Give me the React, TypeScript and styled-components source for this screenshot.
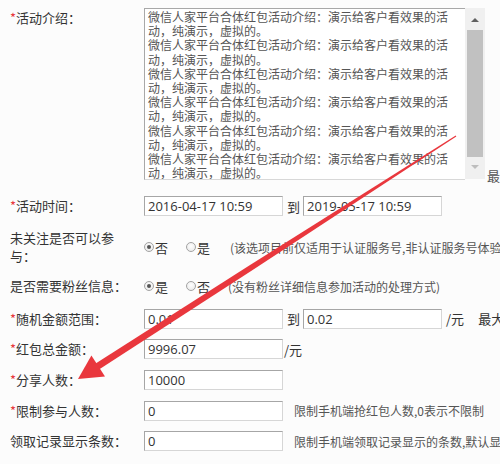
import React from 'react';
import styled, { createGlobalStyle } from 'styled-components';

const Global = createGlobalStyle`
  html, body { margin: 0; padding: 0; background: #fcfcfc; overflow: hidden; }
`;

const Page = styled.div`
  position: relative;
  width: 500px;
  height: 464px;
  overflow: hidden;
  box-sizing: border-box;
  padding: 8px 0 0 10px;
  font-family: "Noto Sans CJK SC", "Open Sans", sans-serif;
  color: #333;
  background: #fcfcfc;
`;

const Row = styled.div<{ $h: number; $top?: boolean }>`
  display: grid;
  grid-template-columns: 134px 1fr;
  align-items: ${p => (p.$top ? 'start' : 'center')};
  height: ${p => p.$h}px;
  white-space: nowrap;
`;

const Label = styled.div`
  width: 124px;
  font-size: 13px;
  line-height: 18px;
  white-space: normal;
  color: #333;
`;

const TopLabel = styled(Label)`
  line-height: 20px;
`;

const Req = styled.span`
  color: #e8383d;
`;

const Field = styled.div`
  display: flex;
  align-items: center;
  white-space: nowrap;
`;

const Input = styled.input`
  width: 139px;
  height: 20px;
  box-sizing: border-box;
  margin: 0;
  padding: 0 3px;
  border: 1px solid;
  border-color: #a6a6a6 #d6d6d6 #d6d6d6 #a6a6a6;
  background: #fff;
  font-family: "Open Sans", "Noto Sans CJK SC", sans-serif;
  font-size: 13px;
  color: #333;
  outline: none;
`;

const Sep = styled.span`
  font-size: 13px;
  margin: 0 3px 0 4px;
  color: #333;
`;

const Unit = styled.span<{ $ml?: number }>`
  font-size: 13px;
  margin-left: ${p => p.$ml ?? 2}px;
  color: #333;
`;

const Extra = styled.span`
  font-size: 13px;
  margin-left: 14px;
  color: #333;
`;

const Note = styled.span<{ $ml?: number }>`
  font-size: 12px;
  margin-left: ${p => p.$ml ?? 11}px;
  color: #555;
`;

const RadioItem = styled.label`
  display: inline-flex;
  align-items: center;
  font-size: 13px;
  color: #333;
  margin-right: 18px;
`;

const RadioDot = styled.span<{ $on?: boolean }>`
  width: 10px;
  height: 10px;
  box-sizing: border-box;
  border-radius: 50%;
  border: 1px solid #a3a3a3;
  background: radial-gradient(circle at 50% 40%, #ffffff 0%, #e6e6e6 100%);
  margin-right: 1px;
  display: inline-flex;
  align-items: center;
  justify-content: center;
  &::after {
    content: '';
    width: 4px;
    height: 4px;
    border-radius: 50%;
    background: ${p => (p.$on ? '#555' : 'transparent')};
  }
`;

const AreaWrap = styled.div`
  display: flex;
  align-items: flex-end;
`;

const AreaBox = styled.div`
  display: flex;
  height: 172px;
`;

const AreaText = styled.div`
  width: 321px;
  box-sizing: border-box;
  border-left: 1px solid #a8a8a8;
  border-top: 1px solid #a8a8a8;
  border-bottom: 1px solid #d8d8d8;
  background: #fff;
  padding: 1px 3px 0;
  overflow: hidden;
`;

const AreaPara = styled.div`
  width: 306px;
  font-size: 12px;
  line-height: 14.2px;
  color: #555;
  white-space: normal;
  word-break: break-all;
`;

const Scroll = styled.div`
  width: 20px;
  height: 171px;
  background: #f0f0f0;
  display: flex;
  flex-direction: column;
  align-items: center;
`;

const ArrowUp = styled.div`
  margin-top: 10px;
  width: 0;
  height: 0;
  border-left: 4px solid transparent;
  border-right: 4px solid transparent;
  border-bottom: 4px solid #606060;
`;

const Thumb = styled.div`
  margin-top: 8px;
  width: 16px;
  height: 127px;
  background: #c1c1c1;
`;

const ArrowDown = styled.div`
  margin-top: 8px;
  width: 0;
  height: 0;
  border-left: 4px solid transparent;
  border-right: 4px solid transparent;
  border-top: 4px solid #bdbdbd;
`;

const Tail = styled.span`
  font-size: 13px;
  line-height: 14px;
  color: #555;
  margin-left: 2px;
  margin-bottom: -3px;
`;

const Overlay = styled.svg`
  position: absolute;
  left: 0;
  top: 0;
  pointer-events: none;
`;

const intro = '微信人家平台合体红包活动介绍：演示给客户看效果的活动，纯演示，虚拟的。';

export default function App() {
  return (
    <Page>
      <Global />
      <Row $h={178} $top>
        <TopLabel><Req>*</Req>活动介绍：</TopLabel>
        <AreaWrap>
          <AreaBox>
            <AreaText>
              {Array.from({ length: 6 }).map((_, i) => (
                <AreaPara key={i}>{intro}</AreaPara>
              ))}
            </AreaText>
            <Scroll>
              <ArrowUp />
              <Thumb />
              <ArrowDown />
            </Scroll>
          </AreaBox>
          <Tail>最多可输入500字</Tail>
        </AreaWrap>
      </Row>
      <Row $h={40}>
        <Label><Req>*</Req>活动时间：</Label>
        <Field>
          <Input readOnly defaultValue="2016-04-17 10:59" />
          <Sep>到</Sep>
          <Input readOnly defaultValue="2019-05-17 10:59" />
        </Field>
      </Row>
      <Row $h={42}>
        <Label>未关注是否可以参与：</Label>
        <Field>
          <RadioItem><RadioDot $on />否</RadioItem>
          <RadioItem><RadioDot />是</RadioItem>
          <Note $ml={2}>(该选项目前仅适用于认证服务号,非认证服务号体验时请选择是)</Note>
        </Field>
      </Row>
      <Row $h={36}>
        <Label>是否需要粉丝信息：</Label>
        <Field>
          <RadioItem><RadioDot $on />是</RadioItem>
          <RadioItem><RadioDot />否</RadioItem>
          <Note $ml={0}>(没有粉丝详细信息参加活动的处理方式)</Note>
        </Field>
      </Row>
      <Row $h={29}>
        <Label><Req>*</Req>随机金额范围：</Label>
        <Field>
          <Input readOnly defaultValue="0.01" />
          <Sep>到</Sep>
          <Input readOnly defaultValue="0.02" />
          <Unit $ml={4}>/元</Unit>
          <Extra>最大金额不能超过200元</Extra>
        </Field>
      </Row>
      <Row $h={32}>
        <Label><Req>*</Req>红包总金额：</Label>
        <Field>
          <Input readOnly defaultValue="9996.07" />
          <Unit $ml={1}>/元</Unit>
        </Field>
      </Row>
      <Row $h={30}>
        <Label><Req>*</Req>分享人数：</Label>
        <Field>
          <Input readOnly defaultValue="10000" />
        </Field>
      </Row>
      <Row $h={31}>
        <Label><Req>*</Req>限制参与人数：</Label>
        <Field>
          <Input readOnly defaultValue="0" />
          <Note>限制手机端抢红包人数,0表示不限制</Note>
        </Field>
      </Row>
      <Row $h={30}>
        <Label>领取记录显示条数：</Label>
        <Field>
          <Input readOnly defaultValue="0" />
          <Note>限制手机端领取记录显示的条数,默认显示10条</Note>
        </Field>
      </Row>
      <Overlay width={500} height={464} viewBox="0 0 500 464">
        <polygon
          points="455.7,135.6 456.3,136.4 251.5,270.7 96.7,371.1 92.9,365.3 248.5,266.1"
          fill="#e9373d"
        />
        <polygon points="78,379 105,376.5 91.4,355.5" fill="#e9373d" />
      </Overlay>
    </Page>
  );
}
